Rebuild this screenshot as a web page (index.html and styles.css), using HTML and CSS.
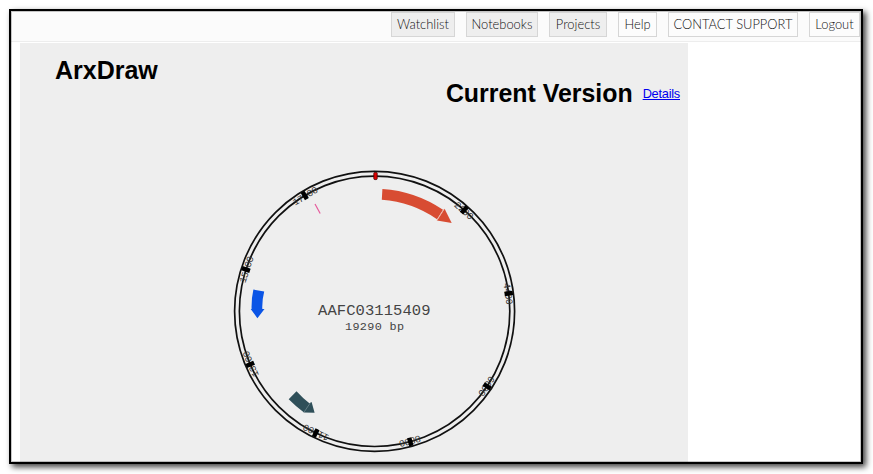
FILE: index.html
```html
<!DOCTYPE html>
<html lang="en">
<head>
<meta charset="utf-8">
<title>ArxDraw</title>
<link rel="stylesheet" href="styles.css">
</head>
<body>
<div class="window">
  <nav class="topbar">
    <a class="btn shaded watchlist">Watchlist</a>
    <a class="btn shaded notebooks">Notebooks</a>
    <a class="btn shaded projects">Projects</a>
    <a class="btn help">Help</a>
    <a class="btn support">CONTACT SUPPORT</a>
    <a class="btn logout">Logout</a>
  </nav>
  <main class="panel">
    <h1 class="title">ArxDraw</h1>
    <div class="version">
      <h2>Current Version</h2>
      <a class="details" href="#">Details</a>
    </div>
    <svg class="plasmid" viewBox="229 166 290 290" width="290" height="290">
      <g class="ring">
        <circle cx="374.6" cy="311.3" r="140"/>
        <circle cx="374.6" cy="311.3" r="135.2"/>
      </g>
      <g transform="translate(374.6 311.3)" class="ticks">
        <g transform="rotate(41.5)"><text y="-131.5">2200</text><rect x="-2.2" y="-139.5" width="4.4" height="8.4"/></g>
        <g transform="rotate(82.4)"><text y="-131.5">4400</text><rect x="-2.2" y="-139.5" width="4.4" height="8.4"/></g>
        <g transform="rotate(123.7)"><text y="-131.5">6600</text><rect x="-2.2" y="-139.5" width="4.4" height="8.4"/></g>
        <g transform="rotate(164.7)"><text y="-131.5">8800</text><rect x="-2.2" y="-139.5" width="4.4" height="8.4"/></g>
        <g transform="rotate(205.8)"><text y="-131.5">11000</text><rect x="-2.2" y="-139.5" width="4.4" height="8.4"/></g>
        <g transform="rotate(246.9)"><text y="-131.5">13200</text><rect x="-2.2" y="-139.5" width="4.4" height="8.4"/></g>
        <g transform="rotate(288)"><text y="-131.5">15400</text><rect x="-2.2" y="-139.5" width="4.4" height="8.4"/></g>
        <g transform="rotate(328.9)"><text y="-131.5">17600</text><rect x="-2.2" y="-139.5" width="4.4" height="8.4"/></g>
      </g>
      <rect class="origin" x="373.8" y="172.4" width="3.4" height="7.2" rx="1"/>
      <path class="red" d="M382.4 189A122.5 122.5 0 0 1 443 209.8L437 219.2A111.5 111.5 0 0 0 381.8 199.8Z"/>
      <path class="red" d="M444.6 208.8L451.7 223L437 220.6Z"/>
      <path class="seam" d="M444 209.2L437 220.2"/>
      <path class="blue" d="M253.4 289.6L264.2 291.5Q262 300 262.3 309H264.5L257.4 318.3L250.7 309H251.6Q251.3 299 253.4 289.6Z"/>
      <path class="teal" d="M296.5 391.3L288.7 399.2Q295.5 406 304 412.6L314.6 412.8L311.6 402L309.4 403.2Q302.5 398 296.5 391.3Z"/>
      <path class="seam-teal" d="M303.8 412.5L310.2 403"/>
      <path class="pink" d="M315 204L320.2 213.5"/>
      <text class="name" x="374.3" y="314.5" textLength="112.5">AAFC03115409</text>
      <text class="length" x="374.5" y="330" textLength="59">19290 bp</text>
    </svg>
  </main>
</div>
</body>
</html>
```
FILE: styles.css
```css
* { box-sizing: border-box; }
body {
  margin: 0;
  padding: 9px;
  height: 474px;
  overflow: hidden;
  background: #fff;
  font-family: "Liberation Sans", Arial, sans-serif;
}
.window {
  width: 854px;
  height: 455px;
  border: 2px solid #000;
  outline: 1px solid rgba(0,0,0,.22);
  outline-offset: -3px;
  box-shadow: 3px 3px 6px rgba(0,0,0,.75);
  background: #fff;
  overflow: hidden;
}
.topbar {
  display: flex;
  align-items: flex-start;
  justify-content: flex-end;
  gap: 11px;
  height: 31px;
  padding: 1px 1px 0 0;
  background: #fbfbfb;
  border-bottom: 1px solid #ededed;
}
.btn {
  height: 25px;
  border: 1px solid #d6d6d6;
  background: #fcfcfc;
  color: #111;
  font: 300 12.9px/23px Lato, sans-serif;
  text-align: center;
  white-space: nowrap;
}
.shaded { background: #eee; }
.watchlist { width: 64px; }
.notebooks { width: 72px; }
.projects { width: 58px; }
.help { width: 39px; }
.support { width: 130px; }
.logout { width: 51px; }
.panel {
  width: 668px;
  height: 420px;
  margin: 1px 0 0 9px;
  background: #eee;
}
.title {
  margin: 0;
  padding: 13px 0 0 35px;
  font-size: 25px;
  line-height: 28px;
}
.version {
  display: flex;
  align-items: center;
  justify-content: flex-end;
  gap: 10px;
  height: 28px;
  margin-top: -5px;
  padding-right: 8px;
}
.version h2 {
  margin: 0;
  font-size: 24.9px;
  line-height: 28px;
}
.details {
  color: #00e;
  font-size: 12.8px;
  letter-spacing: -.25px;
  text-decoration: underline;
}
.plasmid { display: block; margin: 59px 0 0 209px; }
.ring circle { fill: none; stroke: #111; stroke-width: 1.7; }
.ticks text {
  font: 9.7px "Liberation Mono", monospace;
  letter-spacing: -.4px;
  text-anchor: middle;
  fill: #333;
}
.origin { fill: #e00000; stroke: #400; stroke-width: .8; }
.red { fill: #d84c32; }
.blue { fill: #0b55e6; }
.teal { fill: #2f4f59; }
.seam { stroke: #f0a898; stroke-width: .8; }
.seam-teal { stroke: #839aa0; stroke-width: .6; }
.pink { stroke: #e65a9c; stroke-width: 1.2; }
.name, .length {
  font-family: "Liberation Mono", monospace;
  text-anchor: middle;
  fill: #444;
}
.name { font-size: 15.5px; }
.length { font-size: 11.8px; }
```
